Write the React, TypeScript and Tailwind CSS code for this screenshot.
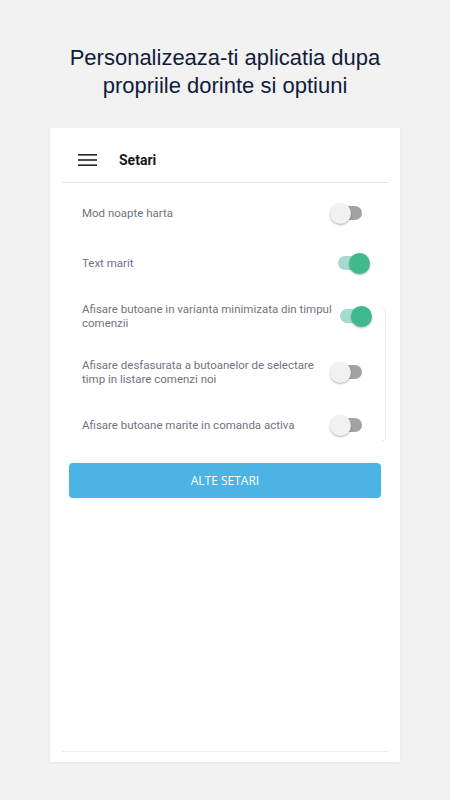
import React, { useState } from 'react';

type Setting = { id: string; label: React.ReactNode; on: boolean; tall?: boolean };

const initial: Setting[] = [
  { id: 'night', label: 'Mod noapte harta', on: false },
  { id: 'text', label: 'Text marit', on: true },
  { id: 'min', label: <>Afisare butoane in varianta minimizata din timpul<br />comenzii</>, on: true, tall: true },
  { id: 'exp', label: <>Afisare desfasurata a butoanelor de selectare<br />timp in listare comenzi noi</>, on: false, tall: true },
  { id: 'big', label: 'Afisare butoane marite in comanda activa', on: false },
];

function Toggle({ on, onClick }: { on: boolean; onClick: () => void }) {
  return (
    <button onClick={onClick} className="relative w-[40px] h-[21px] flex-shrink-0">
      <span
        className={
          'absolute top-[3.5px] h-[14px] rounded-full ' +
          (on ? 'left-[8px] right-[8px] bg-[#a6dcd0]' : 'left-[6px] right-[8px] bg-[#a3a3a3]')
        }
      />
      <span
        className={
          'absolute top-0 w-[21px] h-[21px] rounded-full shadow-[0_1px_2px_rgba(0,0,0,0.3)] ' +
          (on ? 'left-[19px] bg-[#3fba8c]' : 'left-0 bg-[#f1f1f1]')
        }
      />
    </button>
  );
}

export default function App() {
  const [items, setItems] = useState(initial);
  const flip = (id: string) => setItems(p => p.map(s => (s.id === id ? { ...s, on: !s.on } : s)));

  const row = (s: Setting) => (
    <div key={s.id} className={'flex items-center justify-between pl-[32px] pr-[30px] ' + (s.tall ? 'h-[56px]' : 'h-[50px]')}>
      <span className="whitespace-nowrap text-[11.5px] leading-[14px] text-[#6f7482] font-['Roboto',sans-serif]">{s.label}</span>
      <Toggle on={s.on} onClick={() => flip(s.id)} />
    </div>
  );

  return (
    <div className="w-[450px] h-[800px] bg-[#f2f2f2] flex flex-col items-center overflow-hidden">
      <h1 className="mt-[44px] text-center text-[22px] leading-[28px] text-[#111c3b] font-['Liberation_Sans',sans-serif]">
        Personalizeaza-ti aplicatia dupa<br />propriile dorinte si optiuni
      </h1>

      <div className="mt-[28px] w-[350px] h-[634px] bg-white shadow-[0_1px_3px_rgba(0,0,0,0.05)] flex flex-col">
        <div className="h-[54px] flex items-center pl-[28px] pt-[10px]">
          <svg width="19" height="12" viewBox="0 0 19 12">
            <rect x="0" y="0" width="19" height="1.6" fill="#222" />
            <rect x="0" y="5.2" width="19" height="1.6" fill="#222" />
            <rect x="0" y="10.4" width="19" height="1.6" fill="#222" />
          </svg>
          <span className="ml-[22px] text-[14px] font-bold text-[#1a1a1a] font-['Roboto',sans-serif]">Setari</span>
        </div>
        <div className="mx-[12px] h-px bg-[#e3e3e3]" />

        <div className="pt-[5px] flex flex-col">
          {items.slice(0, 2).map(row)}
          <div className="relative flex flex-col">
            <span className="absolute right-[14px] top-[20px] bottom-[9px] w-[4px] border-r border-y border-[#ececec] rounded-r-[4px]" />
            {items.slice(2).map(row)}
          </div>
        </div>

        <button className="mx-[19px] mt-[13px] h-[35px] rounded-[4px] bg-[#4cb4e4] text-white text-[12px] font-['Open_Sans',sans-serif]">
          ALTE SETARI
        </button>

        <div className="flex-1" />
        <div className="mx-[12px] h-px bg-[#ececec]" />
        <div className="h-[10px]" />
      </div>
    </div>
  );
}
